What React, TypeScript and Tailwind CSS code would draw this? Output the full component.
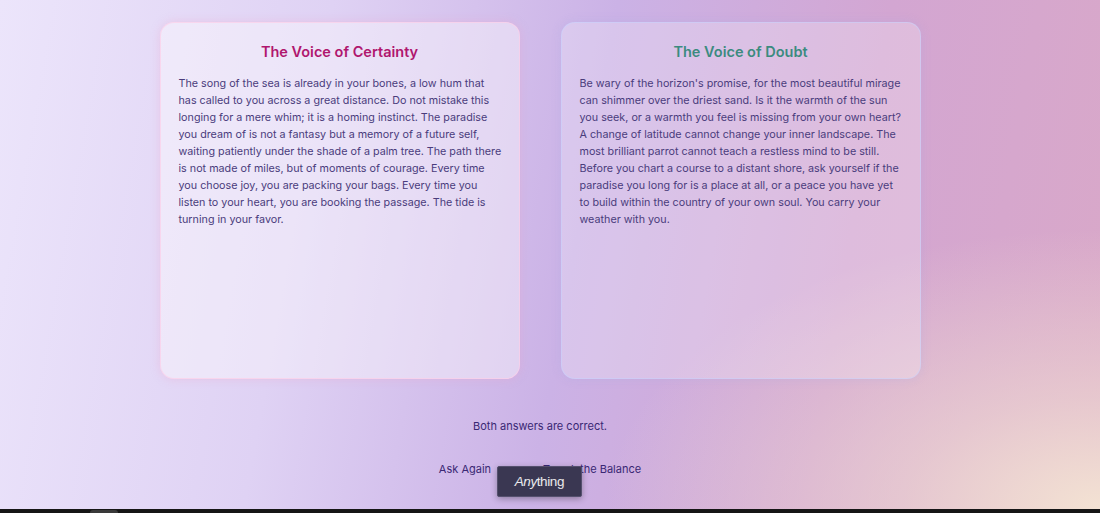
const certainty =
  "The song of the sea is already in your bones, a low hum that has called to you across a great distance. Do not mistake this longing for a mere whim; it is a homing instinct. The paradise you dream of is not a fantasy but a memory of a future self, waiting patiently under the shade of a palm tree. The path there is not made of miles, but of moments of courage. Every time you choose joy, you are packing your bags. Every time you listen to your heart, you are booking the passage. The tide is turning in your favor.";

const doubt =
  "Be wary of the horizon's promise, for the most beautiful mirage can shimmer over the driest sand. Is it the warmth of the sun you seek, or a warmth you feel is missing from your own heart? A change of latitude cannot change your inner landscape. The most brilliant parrot cannot teach a restless mind to be still. Before you chart a course to a distant shore, ask yourself if the paradise you long for is a place at all, or a peace you have yet to build within the country of your own soul. You carry your weather with you.";

function VoiceCard({ title, body, tone }: { title: string; body: string; tone: 'certain' | 'doubt' }) {
  const isCertain = tone === 'certain';
  return (
    <div
      className={
        isCertain
          ? 'w-[360px] h-[357px] rounded-[14px] bg-white/40 border border-pink-200/70 shadow-[0_0_10px_rgba(236,160,200,0.35)] pl-[18px] pr-[14px] pt-[18px]'
          : 'w-[360px] h-[357px] rounded-[14px] bg-white/25 border border-indigo-200/50 shadow-[0_0_10px_rgba(170,170,230,0.3)] pl-[18px] pr-[14px] pt-[18px]'
      }
    >
      <h2
        className={
          isCertain
            ? 'pr-[4px] text-center text-[14.5px] leading-[22px] font-semibold text-[#b0166e] mb-3'
            : 'pr-[4px] text-center text-[14.5px] leading-[22px] font-semibold text-[#3b8b7f] mb-3'
        }
      >
        {title}
      </h2>
      <p className="text-[10.75px] leading-[17px] text-[#4a3c7c]">{body}</p>
    </div>
  );
}

export default function App() {
  return (
    <div className="w-[1100px] h-[513px] overflow-hidden font-['Inter','Noto_Sans',sans-serif]">
      <div className="relative h-[509px] bg-[radial-gradient(ellipse_45%_55%_at_100%_100%,#f3e2d3_0%,rgba(240,220,210,0.6)_40%,transparent_100%),linear-gradient(100deg,#ece5fb_0%,#dfd2f4_28%,#cbb2e6_52%,#d3a6d2_75%,#d9a8c8_100%)]">
        <div className="flex flex-col items-center pr-5 pt-[22px]">
          <div className="flex gap-[41px]">
            <VoiceCard title="The Voice of Certainty" body={certainty} tone="certain" />
            <VoiceCard title="The Voice of Doubt" body={doubt} tone="doubt" />
          </div>
          <p className="mt-[39px] text-[11px] leading-[17px] text-[#3a2874]">Both answers are correct.</p>
          <div className="relative mt-[26px] flex gap-[52px] text-[11px] leading-[17px] text-[#3a2874]">
            <button>Ask Again</button>
            <button>Tweak the Balance</button>
            <div className="absolute left-[58px] top-[5px] w-[85px] h-[31px] rounded-[2px] bg-[#3a3752] border border-[#55506e] shadow-[0_2px_6px_rgba(0,0,0,0.3)] flex items-center justify-center text-[13.5px] text-white/90 font-['Liberation_Sans',sans-serif] tracking-[-0.4px]">
              <span className="italic">Any</span>
              <span className="not-italic">thing</span>
            </div>
          </div>
        </div>
      </div>
      <div className="h-[4px] bg-[#161616] relative">
        <div className="absolute left-[90px] top-[1px] w-[28px] h-[3px] rounded-t bg-[#3a3a3a]" />
      </div>
    </div>
  );
}
